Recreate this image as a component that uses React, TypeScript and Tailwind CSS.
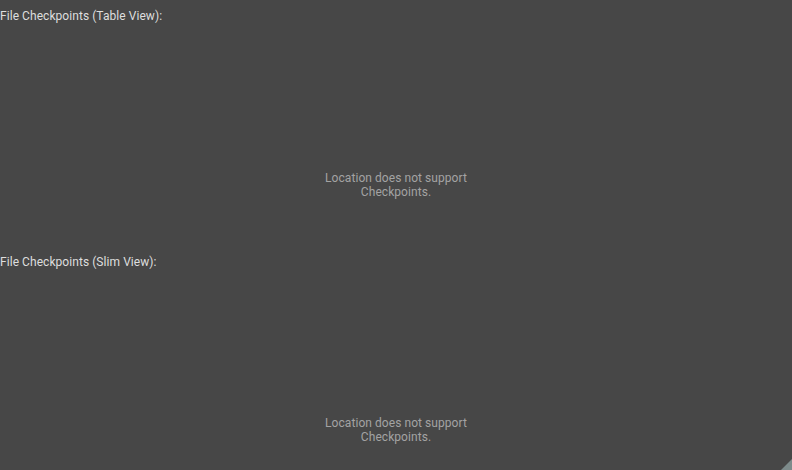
function Section({ title, last }: { title: string; last?: boolean }) {
  return (
    <div className={last ? "flex flex-1 flex-col" : "flex h-[246px] flex-col"}>
      <div className="pt-[9px] text-[12px] leading-[14px] tracking-[0.06px] text-[#dedede]">{title}</div>
      <div
        className={
          last
            ? "pt-[147px] text-center text-[12px] leading-[14px] tracking-[0.06px] text-[#a3a3a3]"
            : "pt-[148px] text-center text-[12px] leading-[14px] tracking-[0.06px] text-[#a3a3a3]"
        }
      >
        Location does not support
        <br />
        Checkpoints.
      </div>
    </div>
  );
}

export default function App() {
  return (
    <div
      className="relative flex h-[470px] w-[792px] flex-col overflow-hidden bg-[#474747]"
      style={{ fontFamily: "Roboto, 'Liberation Sans', sans-serif" }}
    >
      <Section title="File Checkpoints (Table View):" />
      <Section title="File Checkpoints (Slim View):" last />
      {/* resize grip in the corner */}
      <svg className="absolute bottom-0 right-0" width="11" height="11" viewBox="0 0 11 11">
        <polygon points="11,0 11,11 0,11" fill="#7d8b8b" />
      </svg>
    </div>
  );
}
